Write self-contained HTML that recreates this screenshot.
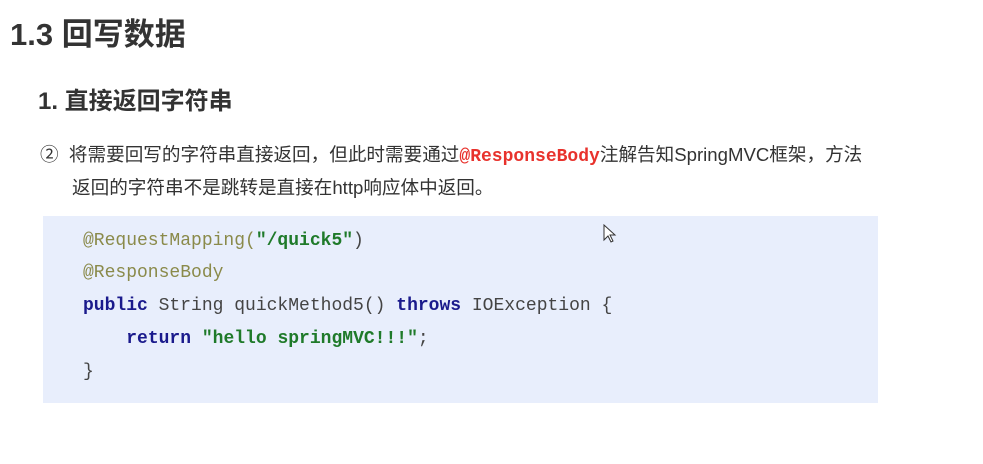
<!DOCTYPE html>
<html><head><meta charset="utf-8"><style>
body{margin:0;width:983px;height:464px;background:#fff;overflow:hidden;position:relative;font-family:"Liberation Sans","Noto Sans CJK SC",sans-serif;color:#333}
.a{position:absolute;white-space:nowrap}
h1{position:absolute;left:10px;top:15px;margin:0;font-size:31px;font-weight:bold;color:#333;line-height:40px}
h2{position:absolute;left:38px;top:86px;margin:0;font-size:24px;font-weight:bold;color:#333;line-height:32px}
.p{font-size:18.6px;line-height:33px;color:#333}
.code{position:absolute;left:43px;top:216px;width:835px;height:187px;background:#e8eefc}
.m{font-family:"Liberation Mono",monospace;font-size:18px}
.cl{position:absolute;left:40px;white-space:pre;font-family:"Liberation Mono",monospace;font-size:18px;color:#444}
.ann{color:#8a8a4a}.kw{color:#1a1a8c;font-weight:bold}.str{color:#1f7a2a;font-weight:bold}
</style></head><body>
<h1>1.3 回写数据</h1>
<h2>1. 直接返回字符串</h2>
<div class="a p" style="left:40px;top:138px">②&nbsp;&nbsp;将需要回写的字符串直接返回，但此时需要通过<span class="m" style="color:#e8322c;font-weight:bold">@ResponseBody</span>注解告知SpringMVC框架，方法</div>
<div class="a p" style="left:72px;top:171px">返回的字符串不是跳转是直接在http响应体中返回。</div>
<div class="code">
<div class="cl" style="top:15px"><span class="ann">@RequestMapping(</span><span class="str">"/quick5"</span>)</div>
<div class="cl" style="top:47px"><span class="ann">@ResponseBody</span></div>
<div class="cl" style="top:80px"><span class="kw">public</span> String quickMethod5() <span class="kw">throws</span> IOException {</div>
<div class="cl" style="top:113px">    <span class="kw">return</span> <span class="str">"hello springMVC!!!"</span>;</div>
<div class="cl" style="top:146px">}</div>
<svg style="position:absolute;left:560px;top:8px" width="14" height="20" viewBox="0 0 14 20"><path d="M1 1 L1 16 L5 12 L8 18 L10 17 L7 11 L12 11 Z" fill="#fff" stroke="#333" stroke-width="1"/></svg>
</div>
</body></html>
